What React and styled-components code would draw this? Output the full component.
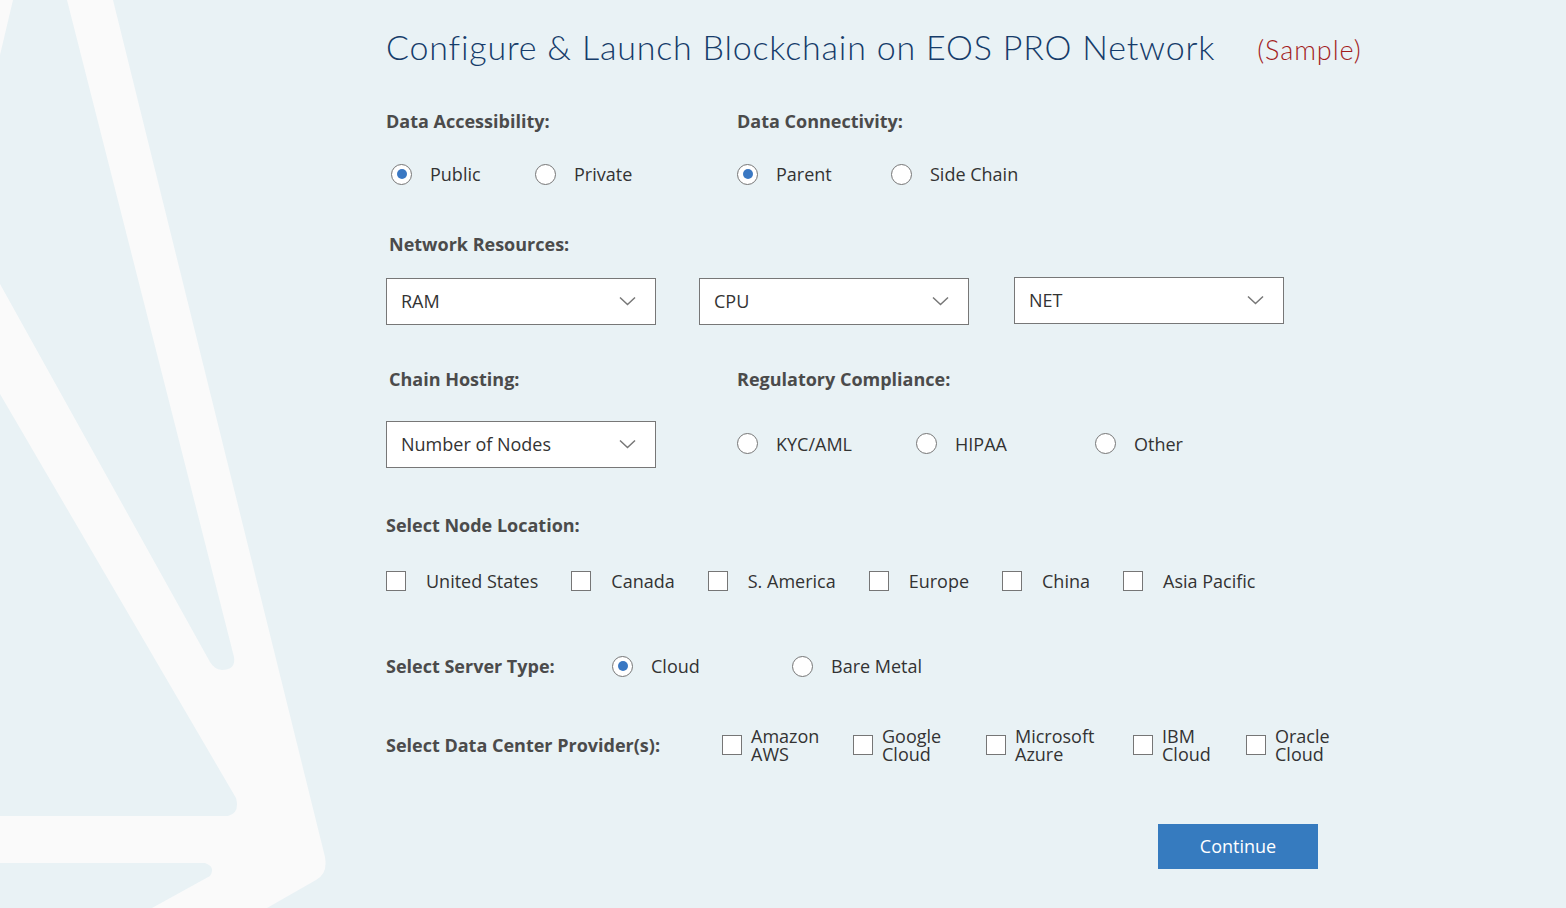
import React from "react";
import styled, { createGlobalStyle } from "styled-components";

const Global = createGlobalStyle`
  html, body { margin: 0; padding: 0; background: #e9f2f5; }
  body { font-family: "Open Sans", "Liberation Sans", sans-serif; }
  * { box-sizing: border-box; }
`;

const Page = styled.div`
  position: relative;
  min-height: 908px;
  width: 1566px;
  overflow: hidden;
  background: #e9f2f5;
`;

const Decor = styled.svg`
  position: absolute;
  left: 0;
  top: 0;
  width: 350px;
  height: 908px;
  z-index: 0;
`;

const Main = styled.main`
  position: relative;
  z-index: 1;
  padding: 27px 0 0 386px;
  display: flex;
  flex-direction: column;
`;

const TitleRow = styled.div`
  display: flex;
  align-items: baseline;
  gap: 42px;
  height: 40px;
`;

const Title = styled.h1`
  margin: 0;
  font-family: Lato, "Open Sans", sans-serif;
  font-weight: 300;
  font-size: 34px;
  letter-spacing: 0.8px;
  line-height: 40px;
  color: #163c6a;
`;

const Sample = styled.span`
  font-family: Lato, "Open Sans", sans-serif;
  font-weight: 300;
  font-size: 27px;
  letter-spacing: 0.9px;
  color: #a31d1d;
`;

const Label = styled.div`
  font-weight: 700;
  font-size: 18px;
  line-height: 24px;
  color: #4b4b4b;
  padding-left: ${(p) => p.$indent || 0}px;
  margin-top: ${(p) => p.$mt || 0}px;
`;

const TwoCol = styled.div`
  display: grid;
  grid-template-columns: 351px auto;
  margin-top: ${(p) => p.$mt || 0}px;
`;

const Column = styled.div`
  display: flex;
  flex-direction: column;
  gap: ${(p) => p.$gap || 0}px;
`;

const OptionRow = styled.div`
  display: flex;
  align-items: center;
  height: ${(p) => p.$h || 24}px;
  margin-top: ${(p) => p.$mt || 0}px;
`;

const Option = styled.label`
  display: flex;
  align-items: center;
  width: ${(p) => (p.$w ? `${p.$w}px` : "auto")};
  font-size: 18px;
  color: #333;
  line-height: 24px;
`;

const Radio = styled.span`
  width: 21px;
  height: 21px;
  border-radius: 50%;
  border: 1px solid #767676;
  background: #fff;
  margin-left: ${(p) => p.$ml || 0}px;
  margin-right: 18px;
  display: flex;
  align-items: center;
  justify-content: center;
  flex: none;
  &::after {
    content: "";
    width: 10px;
    height: 10px;
    border-radius: 50%;
    background: ${(p) => (p.$checked ? "#3a78c3" : "transparent")};
  }
`;

const Check = styled.span`
  width: 20px;
  height: 20px;
  border: 1px solid #767676;
  background: #fff;
  flex: none;
  margin-right: ${(p) => p.$mr || 20}px;
`;

const CheckRow = styled.div`
  display: flex;
  align-items: center;
  gap: 33px;
  margin-top: ${(p) => p.$mt || 0}px;
`;

const TwoLine = styled.span`
  font-size: 18px;
  line-height: 18px;
  color: #333;
  white-space: pre-line;
`;

const SelectRow = styled.div`
  display: flex;
  align-items: flex-start;
  gap: 43px;
  margin-top: ${(p) => p.$mt || 0}px;
`;

const SelectBox = styled.div`
  width: 270px;
  height: 47px;
  border: 1px solid #777;
  background: #fff;
  display: flex;
  align-items: center;
  justify-content: space-between;
  padding: 0 19px 1px 14px;
  font-size: 18px;
  color: #333;
  margin-top: ${(p) => p.$mt || 0}px;
  margin-left: ${(p) => p.$ml || 0}px;
`;

const InlineRow = styled.div`
  display: flex;
  align-items: center;
  margin-top: ${(p) => p.$mt || 0}px;
`;

const InlineLabel = styled(Label)`
  width: ${(p) => p.$w}px;
  flex: none;
`;

const ButtonRow = styled.div`
  display: flex;
  padding-left: 772px;
  margin-top: ${(p) => p.$mt || 0}px;
`;

const Button = styled.button`
  width: 160px;
  height: 45px;
  border: none;
  background: #367bbf;
  color: #fff;
  font-family: "Open Sans", sans-serif;
  font-size: 18px;
  padding: 0 0 2px;
  cursor: pointer;
`;

const Chevron = () => (
  <svg width="17" height="10" viewBox="0 0 17 10" fill="none">
    <path d="M1 1.5 L8.5 8.5 L16 1.5" stroke="#777" strokeWidth="1.5" />
  </svg>
);

const Select = ({ children, mt, ml }) => (
  <SelectBox $mt={mt} $ml={ml}>
    <span>{children}</span>
    <Chevron />
  </SelectBox>
);

const RadioOpt = ({ children, w, checked, ml }) => (
  <Option $w={w}>
    <Radio $checked={checked} $ml={ml} />
    {children}
  </Option>
);

const locations = ["United States", "Canada", "S. America", "Europe", "China", "Asia Pacific"];
const providers = [
  { t: "Amazon\nAWS", w: 131 },
  { t: "Google\nCloud", w: 133 },
  { t: "Microsoft\nAzure", w: 147 },
  { t: "IBM\nCloud", w: 113 },
  { t: "Oracle\nCloud" },
];

export default function App() {
  return (
    <Page>
      <Global />
      <Decor viewBox="0 0 350 908">
        <path
          fill="#fafafa"
          fillRule="evenodd"
          d="M0,0 L113,0 L325,857 Q328,874 316,880 L267,908 L0,908 Z
             M13,0 L67,0 L234,657 Q236,670 222,670 Q214,669 210,662 L0,284 L0,55 Z
             M0,394 L236,798 Q240,813 228,816 L0,816 Z
             M0,863 L205,863 Q216,867 210,876 L152,908 L0,908 Z"
        />
      </Decor>
      <Main>
        <TitleRow>
          <Title>Configure &amp; Launch Blockchain on EOS PRO Network</Title>
          <Sample>(Sample)</Sample>
        </TitleRow>

        <TwoCol $mt={42}>
          <Column $gap={29}>
            <Label>Data Accessibility:</Label>
            <OptionRow>
              <RadioOpt w={149} ml={5} checked>Public</RadioOpt>
              <RadioOpt>Private</RadioOpt>
            </OptionRow>
          </Column>
          <Column $gap={29}>
            <Label>Data Connectivity:</Label>
            <OptionRow>
              <RadioOpt w={154} checked>Parent</RadioOpt>
              <RadioOpt>Side Chain</RadioOpt>
            </OptionRow>
          </Column>
        </TwoCol>

        <Label $mt={46} $indent={3}>Network Resources:</Label>
        <SelectRow $mt={22}>
          <Select>RAM</Select>
          <Select>CPU</Select>
          <Select mt={-1} ml={2}>NET</Select>
        </SelectRow>

        <TwoCol $mt={42}>
          <Column $gap={30}>
            <Label $indent={3}>Chain Hosting:</Label>
            <Select>Number of Nodes</Select>
          </Column>
          <Column $gap={30}>
            <Label>Regulatory Compliance:</Label>
            <OptionRow $h={45}>
              <RadioOpt w={179}>KYC/AML</RadioOpt>
              <RadioOpt w={179}>HIPAA</RadioOpt>
              <RadioOpt>Other</RadioOpt>
            </OptionRow>
          </Column>
        </TwoCol>

        <Label $mt={45}>Select Node Location:</Label>
        <CheckRow $mt={32}>
          {locations.map((l) => (
            <Option key={l}>
              <Check />
              {l}
            </Option>
          ))}
        </CheckRow>

        <InlineRow $mt={61}>
          <InlineLabel $w={226}>Select Server Type:</InlineLabel>
          <RadioOpt w={180} checked>Cloud</RadioOpt>
          <RadioOpt>Bare Metal</RadioOpt>
        </InlineRow>

        <InlineRow $mt={49}>
          <InlineLabel $w={336}>Select Data Center Provider(s):</InlineLabel>
          {providers.map((p) => (
            <Option key={p.t} $w={p.w}>
              <Check $mr={9} />
              <TwoLine>{p.t}</TwoLine>
            </Option>
          ))}
        </InlineRow>

        <ButtonRow $mt={61}>
          <Button>Continue</Button>
        </ButtonRow>
      </Main>
    </Page>
  );
}
